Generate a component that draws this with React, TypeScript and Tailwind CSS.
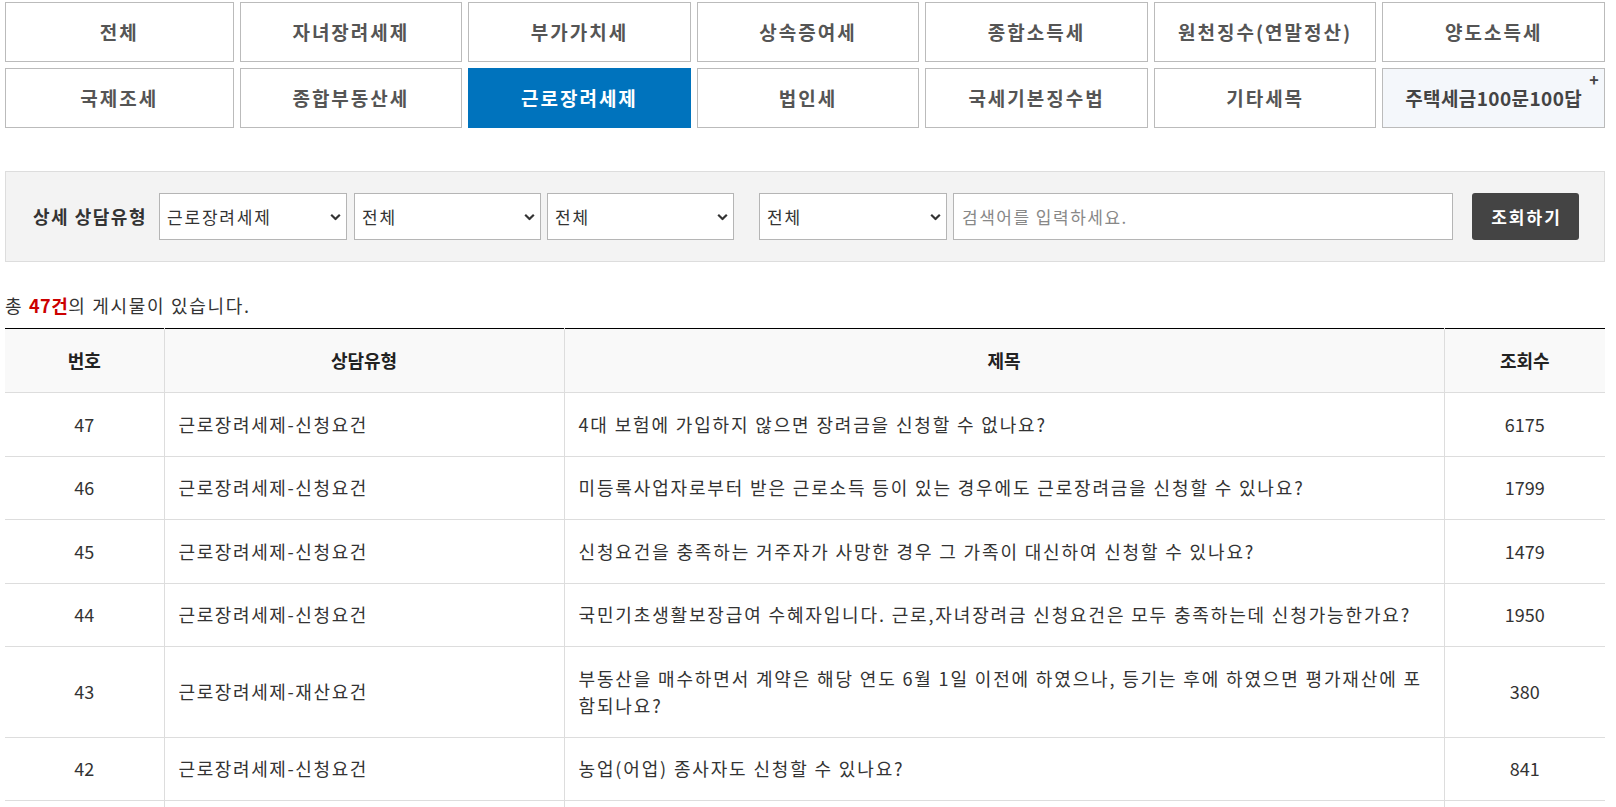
import React from "react";

const tabRows = [
  ["전체", "자녀장려세제", "부가가치세", "상속증여세", "종합소득세", "원천징수(연말정산)", "양도소득세"],
  ["국제조세", "종합부동산세", "근로장려세제", "법인세", "국세기본징수법", "기타세목", "주택세금100문100답"],
];

const rows = [
  { no: 47, type: "근로장려세제-신청요건", title: "4대 보험에 가입하지 않으면 장려금을 신청할 수 없나요?", views: 6175 },
  { no: 46, type: "근로장려세제-신청요건", title: "미등록사업자로부터 받은 근로소득 등이 있는 경우에도 근로장려금을 신청할 수 있나요?", views: 1799 },
  { no: 45, type: "근로장려세제-신청요건", title: "신청요건을 충족하는 거주자가 사망한 경우 그 가족이 대신하여 신청할 수 있나요?", views: 1479 },
  { no: 44, type: "근로장려세제-신청요건", title: "국민기초생활보장급여 수혜자입니다. 근로,자녀장려금 신청요건은 모두 충족하는데 신청가능한가요?", views: 1950 },
  { no: 43, type: "근로장려세제-재산요건", title: "부동산을 매수하면서 계약은 해당 연도 6월 1일 이전에 하였으나, 등기는 후에 하였으면 평가재산에 포함되나요?", views: 380 },
  { no: 42, type: "근로장려세제-신청요건", title: "농업(어업) 종사자도 신청할 수 있나요?", views: 841 },
  { no: 41, type: "근로장려세제-신청요건", title: "외국인도 근로장려금을 신청할 수 있나요?", views: 912 },
];

const Chevron = () => (
  <svg
    className="absolute right-[6px] top-1/2 -translate-y-1/2 pointer-events-none"
    width="11"
    height="7"
    viewBox="0 0 11 7"
    fill="none">
    <path d="M1.2 1.2 5.5 5.5 9.8 1.2" stroke="#333" strokeWidth="2.2" />
  </svg>
);

const Select = ({ value, className }: { value: string; className: string }) => (
  <div className={"relative h-[47px] " + className}>
    <select
      defaultValue={value}
      className="appearance-none w-full h-full bg-white border border-[#b5b5b5] pl-[7px] pr-[20px] text-[17px] tracking-[1.8px] text-[#333] outline-none">
      <option value={value}>{value}</option>
    </select>
    <Chevron />
  </div>
);

const App = () => {
  return (
    <div className="h-screen overflow-hidden bg-white font-['Noto_Sans_CJK_KR','Noto_Sans',sans-serif]">
      <div className="w-[1600px] ml-[5px] pt-[2px]">
        {/* 세목 탭 */}
        {tabRows.map((row, ri) => (
          <div key={ri} className={"grid grid-cols-7 h-[60px] " + (ri > 0 ? "mt-[6px]" : "")}>
            {row.map((label, ci) => {
              const active = label === "근로장려세제";
              const special = label === "주택세금100문100답";
              return (
                <div key={label} className={ci > 0 ? "pl-[6px]" : ""}>
                  <a
                    href="#"
                    className={
                      "relative h-full flex items-center justify-center text-[19px] font-bold " +
                      (active
                        ? "bg-[#0073bd] text-white tracking-[2px]"
                        : special
                        ? "bg-[#f4f7fb] border border-[#bbb] text-[#444] tracking-[0.4px]"
                        : "bg-white border border-[#bbb] text-[#555] tracking-[2px]")
                    }>
                    {label}
                    {special && (
                      <span className="absolute right-[5px] top-[2px] text-[16px] leading-none font-bold text-[#444]">
                        +
                      </span>
                    )}
                  </a>
                </div>
              );
            })}
          </div>
        ))}

        {/* 검색 */}
        <div className="mt-[43px] h-[91px] bg-[#f3f3f3] border border-[#ddd] flex items-center">
          <span className="ml-[27px] w-[126px] text-[18px] font-bold tracking-[1.5px] text-[#333]">상세 상담유형</span>
          <Select value="근로장려세제" className="w-[188px]" />
          <Select value="전체" className="ml-[7px] w-[187px]" />
          <Select value="전체" className="ml-[6px] w-[187px]" />
          <Select value="전체" className="ml-[25px] w-[188px]" />
          <input
            type="text"
            placeholder="검색어를 입력하세요."
            className="ml-[6px] w-[500px] h-[47px] bg-white border border-[#b5b5b5] pl-[8px] text-[17px] tracking-[1.5px] text-[#333] placeholder:text-[#888] outline-none"
          />
          <button
            type="button"
            className="ml-[19px] w-[107px] h-[47px] rounded-[3px] bg-[#444] text-white text-[17px] font-bold tracking-[2px] pl-[2px]">
            조회하기
          </button>
        </div>

        <p className="mt-[30px] text-[18px] leading-[27px] tracking-[1.7px] text-[#333]">
          총 <strong className="text-[#cc0000] tracking-[0.5px]">47건</strong>의 게시물이 있습니다.
        </p>

        {/* 목록 */}
        <table className="mt-[9px] w-[1600px] table-fixed border-collapse border-t border-black text-[18px] leading-[27px] text-[#333]">
          <colgroup>
            <col className="w-[159px]" />
            <col className="w-[400px]" />
            <col className="w-[880px]" />
            <col className="w-[161px]" />
          </colgroup>
          <thead>
            <tr className="bg-[#f9f9f9] text-[#222]">
              <th className="py-[18px] font-bold border-b border-[#ddd]">번호</th>
              <th className="py-[18px] font-bold border-b border-l border-[#ddd]">상담유형</th>
              <th className="py-[18px] font-bold border-b border-l border-[#ddd]">제목</th>
              <th className="py-[18px] font-bold border-b border-l border-[#ddd]">조회수</th>
            </tr>
          </thead>
          <tbody>
            {rows.map((r) => (
              <tr key={r.no}>
                <td className="py-[17.75px] text-center border-b border-[#ddd]">{r.no}</td>
                <td className="py-[17.75px] px-[14px] tracking-[1.6px] border-b border-l border-[#ddd]">{r.type}</td>
                <td className="py-[17.75px] px-[14px] tracking-[1.85px] border-b border-l border-[#ddd]">{r.title}</td>
                <td className="py-[17.75px] text-center border-b border-l border-[#ddd]">{r.views}</td>
              </tr>
            ))}
          </tbody>
        </table>
      </div>
    </div>
  );
};

export default App;
